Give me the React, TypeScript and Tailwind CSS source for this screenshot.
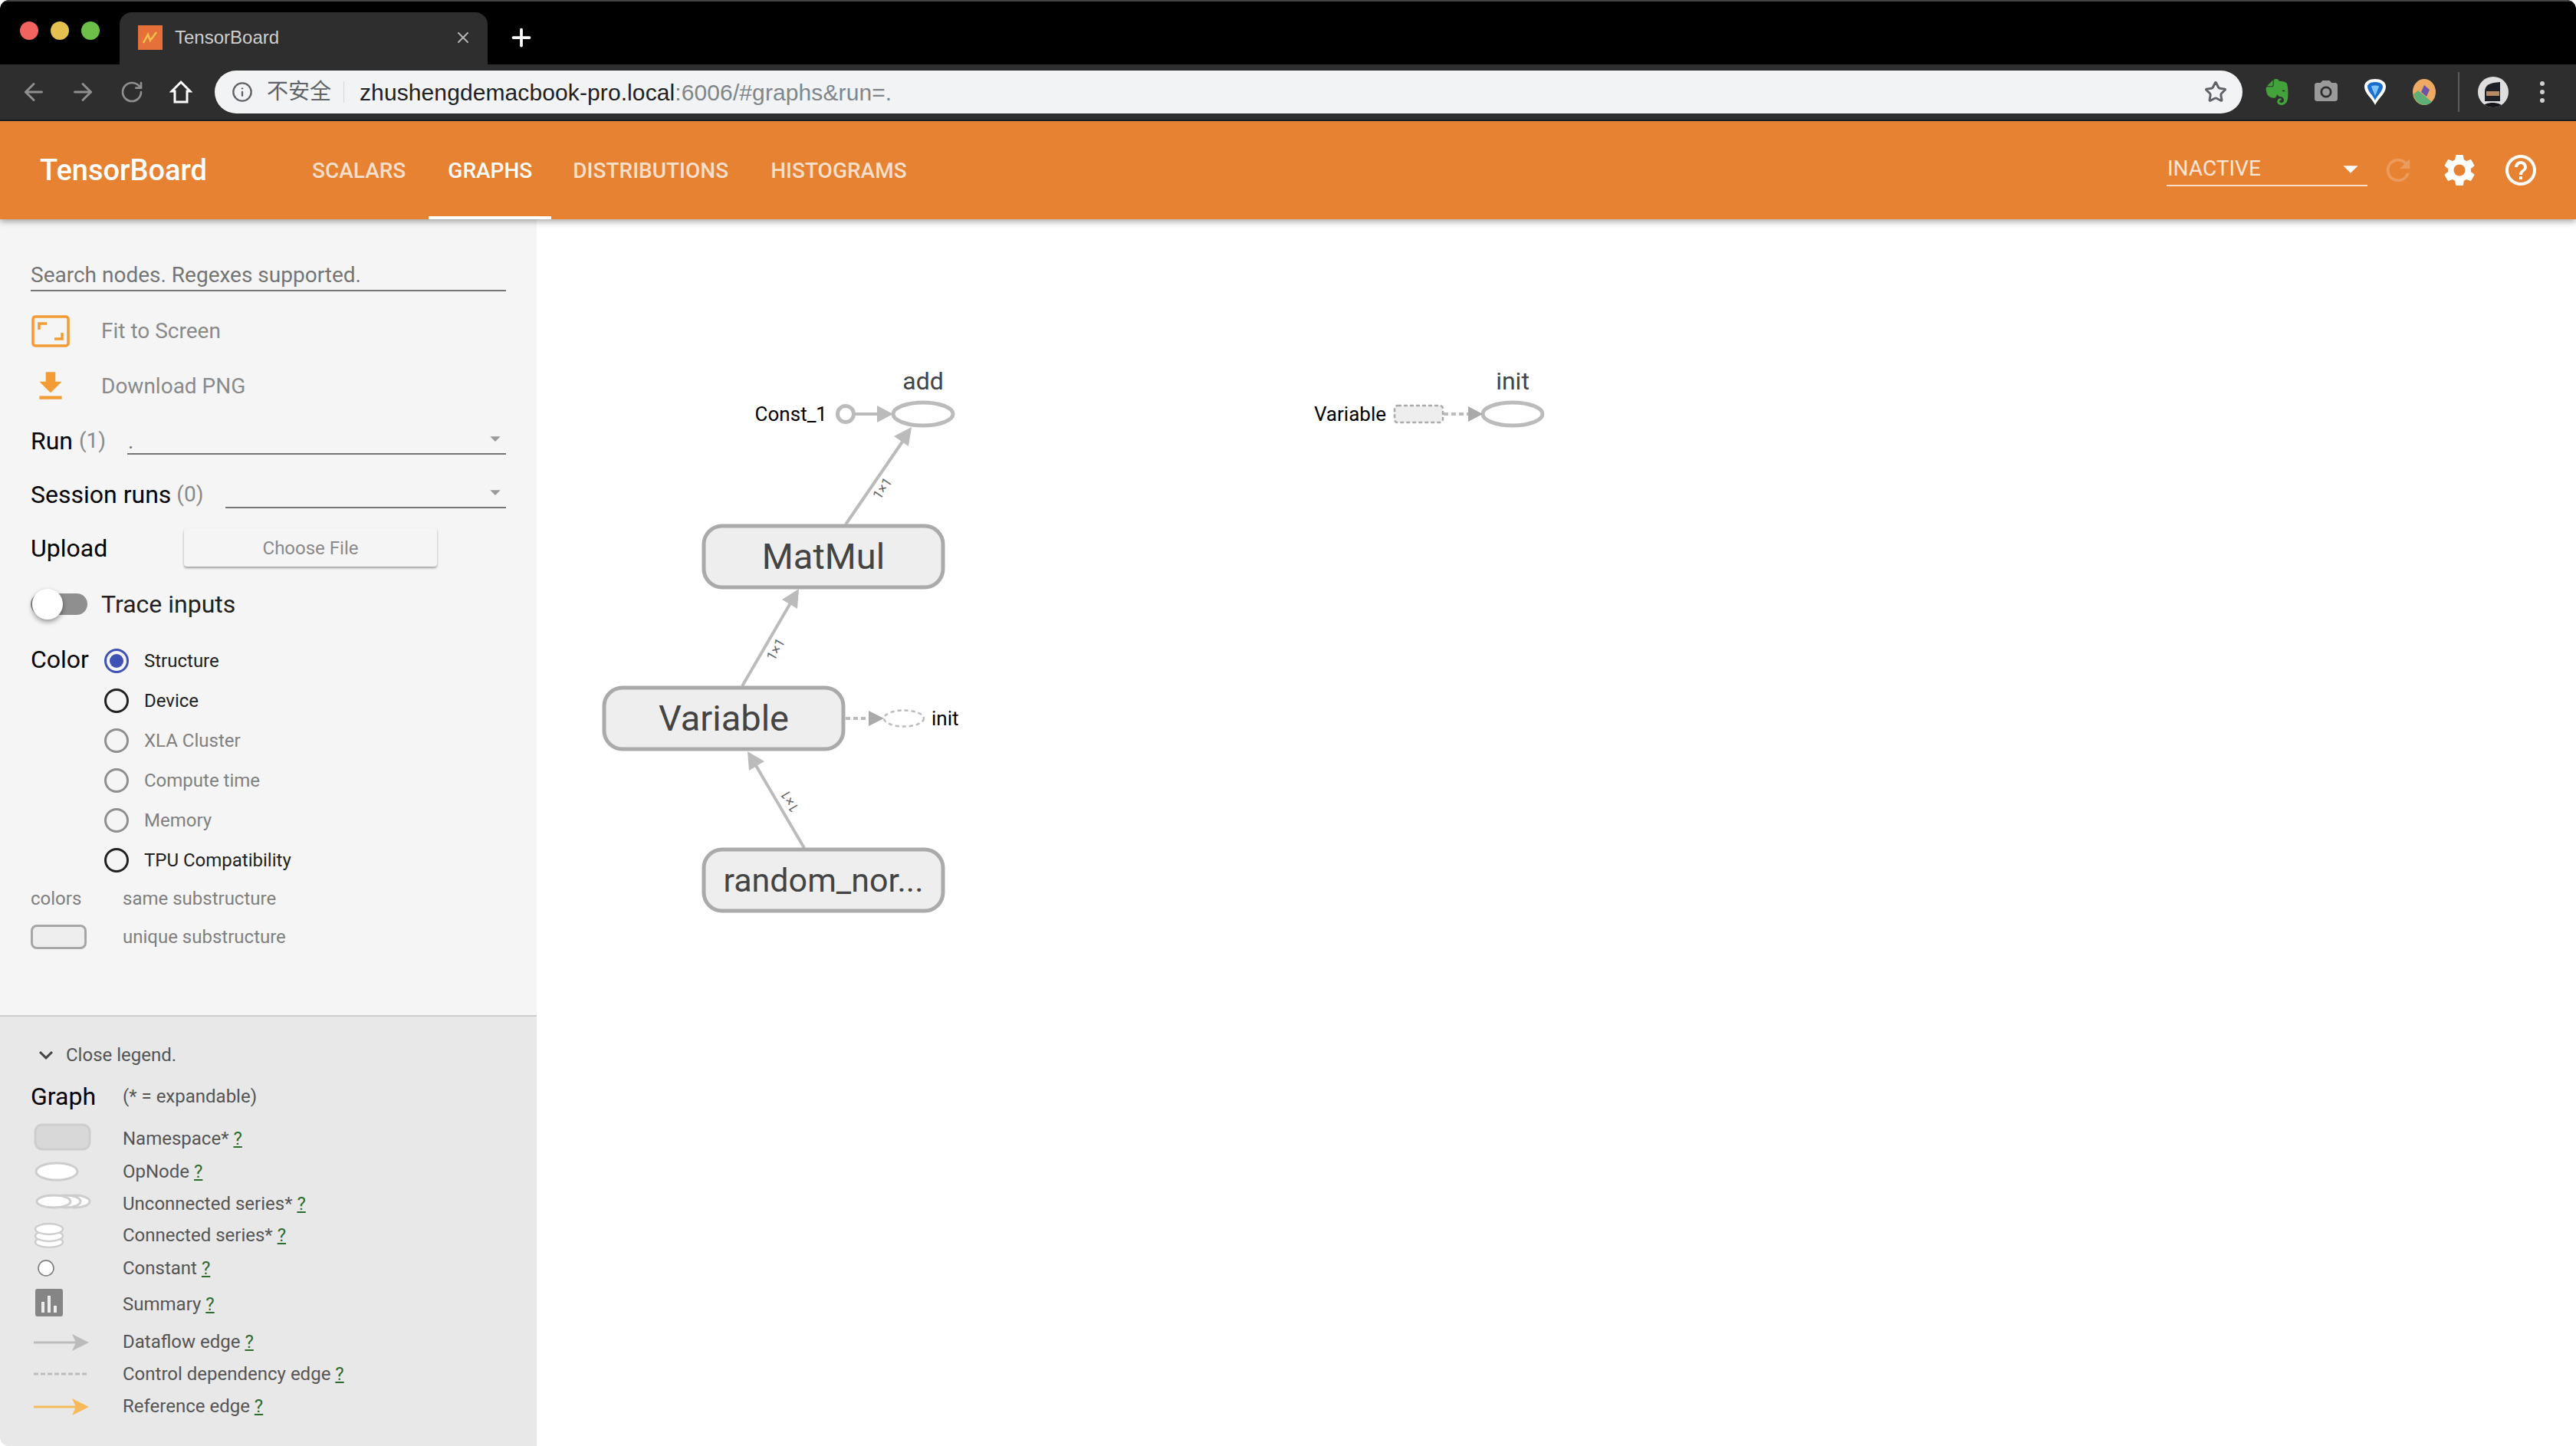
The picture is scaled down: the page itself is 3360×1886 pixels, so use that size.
import { ArrowLeft, ArrowRight, Info, Plus, RotateCw, Star, X } from 'lucide-react';
import { MdArrowDropDown, MdCameraAlt, MdExpandMore, MdFileDownload, MdHelpOutline, MdRefresh, MdSettings } from 'react-icons/md';
import { SiEvernote } from 'react-icons/si';

const radios = [
  { label: 'Structure', tone: 'selected' },
  { label: 'Device', tone: 'on' },
  { label: 'XLA Cluster', tone: 'off' },
  { label: 'Compute time', tone: 'off' },
  { label: 'Memory', tone: 'off' },
  { label: 'TPU Compatibility', tone: 'on' },
];

function Arrow({ x, y, color }: { x: number; y: number; color: string }) {
  return <path d={`M${x - 22} ${y - 11} L${x} ${y} L${x - 22} ${y + 11} L${x - 17} ${y} Z`} fill={color} />;
}

const legendRows = [
  {
    label: 'Namespace*',
    h: 'h-[42px]',
    icon: <rect x="6" y="4" width="71" height="32" rx="9" fill="#d8d8d8" stroke="#cdcdcd" strokeWidth="3" />,
  },
  {
    label: 'OpNode',
    h: 'h-[44px]',
    icon: <ellipse cx="34" cy="22" rx="27" ry="11" fill="#fff" stroke="#cdcdcd" strokeWidth="3" />,
  },
  {
    label: 'Unconnected series*',
    h: 'h-[40px]',
    icon: (
      <g fill="#fff" stroke="#cdcdcd" strokeWidth="3">
        <ellipse cx="58" cy="19" rx="19" ry="8" />
        <ellipse cx="46" cy="19" rx="19" ry="8" />
        <ellipse cx="30" cy="19" rx="22" ry="8" />
      </g>
    ),
  },
  {
    label: 'Connected series*',
    h: 'h-[42px]',
    icon: (
      <g fill="#fff" stroke="#cdcdcd" strokeWidth="2.5">
        <ellipse cx="24" cy="31" rx="18" ry="7" />
        <ellipse cx="24" cy="23" rx="18" ry="7" />
        <ellipse cx="24" cy="14" rx="18" ry="7" />
      </g>
    ),
  },
  {
    label: 'Constant',
    h: 'h-[44px]',
    icon: <ellipse cx="20" cy="22" rx="10" ry="10" fill="#fff" stroke="#777" strokeWidth="1.5" />,
  },
  {
    label: 'Summary',
    h: 'h-[50px]',
    icon: (
      <g>
        <rect x="6" y="2" width="36" height="36" rx="3" fill="#858585" />
        <rect x="14" y="19" width="4" height="14" fill="#eee" />
        <rect x="22" y="11" width="4" height="22" fill="#eee" />
        <rect x="30" y="24" width="4" height="9" fill="#eee" />
      </g>
    ),
  },
  {
    label: 'Dataflow edge',
    h: 'h-[48px]',
    icon: (
      <g>
        <line x1="4" y1="23" x2="60" y2="23" stroke="#bbb" strokeWidth="3" />
        <Arrow x={76} y={23} color="#bbb" />
      </g>
    ),
  },
  {
    label: 'Control dependency edge',
    h: 'h-[36px]',
    icon: <line x1="4" y1="22" x2="76" y2="22" stroke="#bbb" strokeWidth="3" strokeDasharray="6 3" />,
  },
  {
    label: 'Reference edge',
    h: 'h-[48px]',
    icon: (
      <g>
        <line x1="4" y1="23" x2="60" y2="23" stroke="#f6b95c" strokeWidth="3" />
        <Arrow x={76} y={23} color="#f6b95c" />
      </g>
    ),
  },
];

function BrowserChrome() {
  return (
    <div className="shrink-0 [font-family:'Liberation_Sans','Noto_Sans_CJK_SC',sans-serif]">
      <div className="flex h-[84px] items-end border-t-2 border-[#444] bg-black">
        <div className="flex h-[82px] w-[156px] items-center gap-[16px] pb-[6px] pl-[26px]">
          <span className="h-[24px] w-[24px] rounded-full bg-[#f0635f]" />
          <span className="h-[24px] w-[24px] rounded-full bg-[#e3c04f]" />
          <span className="h-[24px] w-[24px] rounded-full bg-[#6cc04a]" />
        </div>
        <div className="flex h-[68px] w-[480px] items-center rounded-t-[16px] bg-[#2e2e2e] pb-[2px] pl-[24px] pr-[20px]">
          <svg width="32" height="32" viewBox="0 0 32 32" className="shrink-0">
            <rect width="32" height="32" fill="#e5703a" />
            <path d="M7 23 L13 12 L16 20 L24 9" fill="none" stroke="#f5c04a" strokeWidth="2.5" />
          </svg>
          <span className="ml-[16px] flex-1 text-[24px] text-[#cfcfcf]">TensorBoard</span>
          <X size={24} strokeWidth={2} className="text-[#b5b5b5]" />
        </div>
        <div className="flex h-[68px] w-[88px] items-center justify-center pb-[2px]">
          <Plus size={36} strokeWidth={2.5} className="text-white" />
        </div>
      </div>
      <div className="flex h-[74px] items-center border-b-2 border-[#222] bg-[#2e2e2e]">
        <div className="flex w-[280px] items-center pl-[12px] text-[#8f8f8f]">
          <span className="flex w-[64px] justify-center"><ArrowLeft size={36} strokeWidth={2} /></span>
          <span className="flex w-[64px] justify-center"><ArrowRight size={36} strokeWidth={2} /></span>
          <span className="flex w-[64px] justify-center"><RotateCw size={32} strokeWidth={2} /></span>
          <span className="flex w-[64px] justify-center text-white">
            <svg width="30" height="32" viewBox="0 0 30 32">
              <path d="M15 3 L27 15 H23 V29 H7 V15 H3 Z" fill="none" stroke="currentColor" strokeWidth="3" />
            </svg>
          </span>
        </div>
        <div className="flex h-[56px] w-[2645px] items-center rounded-full bg-[#f1f3f4] pl-[22px] pr-[20px]">
          <Info size={28} strokeWidth={2} className="text-[#5f6368]" />
          <span className="ml-[18px] text-[28px] text-[#5f6368]">不安全</span>
          <span className="ml-[16px] h-[28px] w-[1px] bg-[#d5d7da]" />
          <span className="ml-[20px] flex-1 text-[30px] tracking-[0.1px] text-[#202124]">
            zhushengdemacbook-pro.local<span className="text-[#80868b]">:6006/#graphs&amp;run=.</span>
          </span>
          <Star size={30} strokeWidth={2.4} className="text-[#5f6368]" />
        </div>
        <div className="flex items-center pl-[13px]">
          <span className="flex w-[64px] justify-center"><SiEvernote size={34} className="text-[#43a33b]" /></span>
          <span className="flex w-[64px] justify-center"><MdCameraAlt size={36} className="text-[#9a9a9a]" /></span>
          <span className="flex w-[64px] justify-center">
            <svg width="32" height="36" viewBox="0 0 32 36">
              <path d="M16 35 C12 26 2 20 2 11 C2 4 9 1 16 1 C23 1 30 4 30 11 C30 20 20 26 16 35 Z" fill="#fff" />
              <path d="M16 29 C13 22 6 17 6 11 C6 7 11 5 16 5 C21 5 26 7 26 11 C26 17 19 22 16 29 Z" fill="#1a6fd0" />
              <path d="M11 11 C11 9 21 9 21 11 L16 23 Z" fill="#7fc4f5" />
            </svg>
          </span>
          <span className="flex w-[64px] justify-center">
            <svg width="32" height="36" viewBox="0 0 32 36">
              <ellipse cx="16" cy="18" rx="15" ry="17" fill="#eeaa62" />
              <path d="M2 21 L8 16 L26 31 C20 37 6 37 2 21 Z" fill="#5eae78" />
              <path d="M16 9 L23 15 L19 24 L12 18 Z" fill="#6a55a8" />
            </svg>
          </span>
          <span className="mx-[12px] h-[52px] w-[2px] bg-[#5c5c5c]" />
          <span className="ml-[12px] flex h-[40px] w-[40px] items-end justify-center overflow-hidden rounded-full bg-[#dedede]">
            <svg width="28" height="36" viewBox="0 0 28 36">
              <path d="M3 16 C3 6 10 4 23 3 L23 28 H3 Z" fill="#1d2026" />
              <rect x="5" y="15" width="17" height="6" fill="#b78a62" />
              <path d="M0 36 C2 28 24 28 27 36 Z" fill="#14161a" />
            </svg>
          </span>
          <span className="ml-[38px] flex w-[12px] flex-col items-center gap-[5px]">
            <span className="h-[6px] w-[6px] rounded-full bg-[#d0d0d0]" />
            <span className="h-[6px] w-[6px] rounded-full bg-[#d0d0d0]" />
            <span className="h-[6px] w-[6px] rounded-full bg-[#d0d0d0]" />
          </span>
        </div>
      </div>
    </div>
  );
}

function Header() {
  return (
    <div className="relative z-20 flex h-[128px] shrink-0 items-center bg-[#e68232] shadow-[0_3px_8px_rgba(0,0,0,0.35)]">
      <div className="w-[381px] pl-[52px] text-[38px] font-medium text-white">TensorBoard</div>
      <div className="flex h-full items-stretch text-[28px] font-medium text-white/75">
        <span className="flex items-center pl-[26px] pr-[30px] pt-[2px]">SCALARS</span>
        <span className="flex items-center border-b-4 border-white px-[25px] pt-[6px] text-white">GRAPHS</span>
        <span className="flex items-center px-[28px] pt-[2px]">DISTRIBUTIONS</span>
        <span className="flex items-center pl-[27px] pt-[2px]">HISTOGRAMS</span>
      </div>
      <div className="ml-auto flex items-center pr-[48px]">
        <div className="flex h-[42px] w-[262px] items-center justify-between border-b-2 border-[#f8dcc4] pb-[2px] pl-[1px] text-[28px] text-white/80">
          <span>INACTIVE</span>
          <MdArrowDropDown size={46} className="-mr-[1px] text-white" />
        </div>
        <MdRefresh size={46} className="ml-[17px] text-white/20" />
        <MdSettings size={50} className="ml-[32px] text-white" />
        <MdHelpOutline size={48} className="ml-[31px] text-white" />
      </div>
    </div>
  );
}

function Sidebar() {
  return (
    <div className="flex h-full w-[700px] shrink-0 flex-col bg-[#f5f5f5]">
      <div className="flex flex-1 flex-col pl-[40px] pr-[40px]">
        <div className="mt-[54px] flex h-[40px] items-center border-b-2 border-[#757575] text-[28px] leading-none text-[#757575]">
          Search nodes. Regexes supported.
        </div>
        <div className="mt-[16px] flex h-[72px] items-center text-[28px] text-[#8a8a8a]">
          <svg width="50" height="42" viewBox="0 0 50 42" className="ml-[1px] w-[50px] shrink-0">
            <rect x="2" y="2" width="46" height="38" rx="3" fill="none" stroke="#f39c35" strokeWidth="3.5" />
            <path d="M10 19 V11 H20" fill="none" stroke="#f39c35" strokeWidth="3.5" />
            <path d="M40 23 V31 H30" fill="none" stroke="#f39c35" strokeWidth="3.5" />
          </svg>
          <span className="ml-[41px]">Fit to Screen</span>
        </div>
        <div className="flex h-[72px] items-center text-[28px] text-[#8a8a8a]">
          <MdFileDownload size={50} className="ml-[1px] shrink-0 text-[#f39c35]" />
          <span className="ml-[41px]">Download PNG</span>
        </div>
        <div className="flex h-[70px] items-center text-[32px] text-black">
          <span>Run</span>
          <span className="ml-[8px] text-[28px] text-[#8a8a8a]">(1)</span>
          <div className="relative ml-[28px] flex h-[36px] flex-1 items-end border-b-2 border-[#757575] pl-[1px] text-[28px] leading-[30px] text-[#757575]">
            .
            <MdArrowDropDown size={32} className="absolute right-[-2px] top-[-1px] text-[#9a9a9a]" />
          </div>
        </div>
        <div className="flex h-[70px] items-center text-[32px] text-black">
          <span>Session runs</span>
          <span className="ml-[7px] text-[28px] text-[#8a8a8a]">(0)</span>
          <div className="relative ml-[29px] h-[36px] flex-1 border-b-2 border-[#757575]">
            <MdArrowDropDown size={32} className="absolute right-[-2px] top-[-1px] text-[#9a9a9a]" />
          </div>
        </div>
        <div className="flex h-[70px] items-center text-[32px] text-black">
          <span className="w-[200px]">Upload</span>
          <div className="flex h-[50px] w-[330px] -translate-y-[1px] items-center justify-center rounded-[4px] bg-[#f5f5f5] pt-[1px] text-[24px] text-[#8a8a8a] shadow-[0_2px_3px_rgba(0,0,0,0.35)]">
            Choose File
          </div>
        </div>
        <div className="flex h-[76px] items-center text-[32px] text-[#212121]">
          <div className="relative h-[28px] w-[74px] rounded-full bg-[#8f8f8f]">
            <span className="absolute left-[2px] top-[-6px] h-[40px] w-[40px] rounded-full bg-white shadow-[0_3px_6px_rgba(0,0,0,0.4)]" />
          </div>
          <span className="ml-[18px]">Trace inputs</span>
        </div>
        <div className="mt-[10px] flex">
          <div className="w-[96px] pt-[2px] text-[32px] leading-[44px] text-black">Color</div>
          <div>
            {radios.map((r) => (
              <div key={r.label} className="flex h-[52px] items-center">
                {r.tone === 'selected' && (
                  <span className="flex h-[32px] w-[32px] items-center justify-center rounded-full border-[3px] border-[#3f51b5]">
                    <span className="h-[18px] w-[18px] rounded-full bg-[#3f51b5]" />
                  </span>
                )}
                {r.tone === 'on' && <span className="h-[32px] w-[32px] rounded-full border-[3.5px] border-[#212121]" />}
                {r.tone === 'off' && <span className="h-[32px] w-[32px] rounded-full border-[3.5px] border-[#8f8f8f]" />}
                <span className={`ml-[20px] text-[24px] ${r.tone === 'off' ? 'text-[#808080]' : 'text-[#212121]'}`}>{r.label}</span>
              </div>
            ))}
          </div>
        </div>
        <div className="flex h-[48px] items-center text-[24px] text-[#808080]">
          <span className="w-[120px]">colors</span>
          <span>same substructure</span>
        </div>
        <div className="flex h-[52px] items-center text-[24px] text-[#808080]">
          <span className="mr-[47px] h-[32px] w-[73px] rounded-[8px] border-[3px] border-[#a6a6a6] bg-[#eeeeee]" />
          <span>unique substructure</span>
        </div>
      </div>
      <div className="h-[562px] shrink-0 border-t-2 border-[#cccccc] bg-[#e8e8e8] pl-[40px] pt-[30px]">
        <div className="flex h-[40px] items-center text-[24px] text-[#555]">
          <MdExpandMore size={36} className="ml-[2px] text-[#444]" />
          <span className="ml-[8px]">Close legend.</span>
        </div>
        <div className="flex h-[68px] items-center">
          <span className="w-[120px] text-[32px] text-black">Graph</span>
          <span className="text-[24px] text-[#555]">(* = expandable)</span>
        </div>
        {legendRows.map((row) => (
          <div key={row.label} className={`flex items-center text-[24px] text-[#555] ${row.h}`}>
            <svg width="120" height="44" viewBox="0 0 120 44" className="shrink-0">
              {row.icon}
            </svg>
            <span>
              {row.label} <span className="text-[#2e6b2e] underline">?</span>
            </span>
          </div>
        ))}
      </div>
    </div>
  );
}

function GraphCanvas() {
  const nodeFill = '#eeeeee';
  const nodeStroke = '#aaaaaa';
  return (
    <div className="relative min-w-0 flex-1 bg-white">
      <svg width="2660" height="1600" viewBox="700 286 2660 1600" className="block [font-family:Roboto,sans-serif]">
        {/* add */}
        <text x="1204" y="508" textAnchor="middle" fontSize="32" fill="#444">add</text>
        <ellipse cx="1204" cy="540" rx="39" ry="15" fill="#fff" stroke="#bbb" strokeWidth="5" />
        <text x="1079" y="549" textAnchor="end" fontSize="26" fill="#000">Const_1</text>
        <circle cx="1103" cy="540" r="10.5" fill="#fff" stroke="#bbb" strokeWidth="5" />
        <line x1="1114" y1="540" x2="1150" y2="540" stroke="#bbb" strokeWidth="4" />
        <path d="M1144 529 L1165 540 L1144 551 Z" fill="#bbb" />

        {/* edges */}
        <line x1="1103" y1="684" x2="1184" y2="566" stroke="#bbb" strokeWidth="4" />
        <path d="M1189 557 L1185 582 L1166 569 Z" fill="#bbb" />
        <text x="1151" y="643" textAnchor="middle" fontSize="18" fill="#666" transform="rotate(-56 1151 637)">1×1</text>

        <line x1="968" y1="895" x2="1036" y2="778" stroke="#bbb" strokeWidth="4" />
        <path d="M1042 768 L1040 794 L1020 782 Z" fill="#bbb" />
        <text x="1012" y="853" textAnchor="middle" fontSize="18" fill="#666" transform="rotate(-60 1012 847)">1×1</text>

        <line x1="1049" y1="1106" x2="981" y2="990" stroke="#bbb" strokeWidth="4" />
        <path d="M975 980 L997 993 L977 1005 Z" fill="#bbb" />
        <text x="1030" y="1051" textAnchor="middle" fontSize="18" fill="#666" transform="rotate(240 1030 1045)">1×1</text>

        {/* big nodes */}
        <rect x="918" y="686" width="312" height="80" rx="24" fill={nodeFill} stroke={nodeStroke} strokeWidth="5" />
        <text x="1074" y="742" textAnchor="middle" fontSize="47" fill="#444">MatMul</text>
        <rect x="788" y="897" width="312" height="80" rx="24" fill={nodeFill} stroke={nodeStroke} strokeWidth="5" />
        <text x="944" y="953" textAnchor="middle" fontSize="47" fill="#444">Variable</text>
        <rect x="918" y="1108" width="312" height="80" rx="24" fill={nodeFill} stroke={nodeStroke} strokeWidth="5" />
        <text x="1074" y="1163" textAnchor="middle" fontSize="43" fill="#444">random_nor...</text>

        {/* control dep of Variable */}
        <line x1="1103" y1="937" x2="1134" y2="937" stroke="#bbb" strokeWidth="4" strokeDasharray="6 4" />
        <path d="M1133 927 L1153 937 L1133 947 Z" fill="#aaa" />
        <ellipse cx="1179" cy="937" rx="26" ry="10.5" fill="#fff" stroke="#bbb" strokeWidth="2.5" strokeDasharray="5 4" />
        <text x="1215" y="946" fontSize="26" fill="#000">init</text>

        {/* init */}
        <text x="1973" y="508" textAnchor="middle" fontSize="32" fill="#444">init</text>
        <ellipse cx="1973" cy="540" rx="39" ry="15" fill="#fff" stroke="#bbb" strokeWidth="5" />
        <text x="1808" y="549" textAnchor="end" fontSize="26" fill="#000">Variable</text>
        <rect x="1819" y="529" width="63" height="22" rx="4" fill={nodeFill} stroke="#aaa" strokeWidth="2.5" strokeDasharray="5 3" />
        <line x1="1883" y1="540" x2="1915" y2="540" stroke="#bbb" strokeWidth="4" strokeDasharray="6 4" />
        <path d="M1915 530 L1934 540 L1915 550 Z" fill="#aaa" />
      </svg>
    </div>
  );
}

export default function App() {
  return (
    <div className="flex h-[1886px] w-[3360px] flex-col overflow-hidden rounded-[12px] bg-white [font-family:Roboto,sans-serif]">
      <BrowserChrome />
      <Header />
      <div className="flex min-h-0 flex-1">
        <Sidebar />
        <GraphCanvas />
      </div>
    </div>
  );
}
